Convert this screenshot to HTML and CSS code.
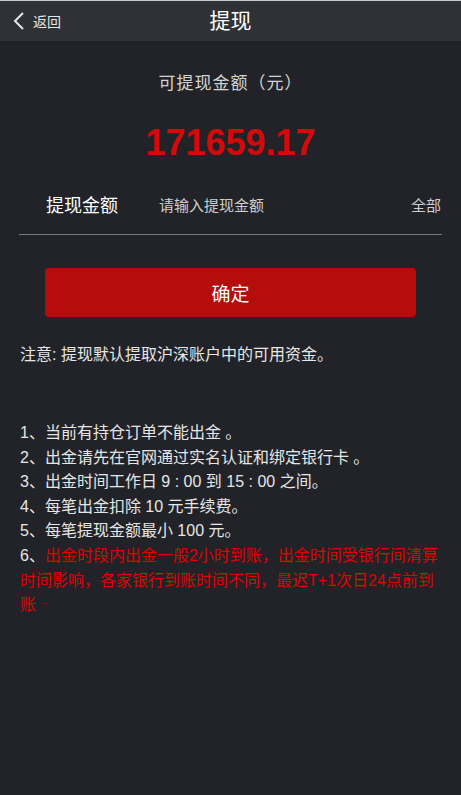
FILE: index.html
```html
<!DOCTYPE html>
<html lang="zh-CN">
<head>
<meta charset="utf-8">
<title>提现</title>
<link rel="stylesheet" href="styles.css">
</head>
<body>
<header class="topbar">
  <a class="back" href="#">
    <svg class="back-icon" width="12" height="20" viewBox="0 0 12 20"><path d="M10 2 L2 10 L10 18" fill="none" stroke="#e6e6e6" stroke-width="2"/></svg>
    <span>返回</span>
  </a>
  <h1 class="title">提现</h1>
</header>
<main class="page">
  <section class="summary">
    <div class="summary-label">可提现金额（元）</div>
    <div class="summary-amount">171659.17</div>
  </section>
  <div class="field">
    <label class="field-label">提现金额</label>
    <span class="field-input">请输入提现金额</span>
    <span class="field-all">全部</span>
  </div>
  <div class="actions">
    <button class="confirm">确定</button>
  </div>
  <p class="note">注意: 提现默认提取沪深账户中的可用资金。</p>
  <ol class="rules">
    <li>1、当前有持仓订单不能出金 。</li>
    <li>2、出金请先在官网通过实名认证和绑定银行卡 。</li>
    <li>3、出金时间工作日 9 : 00 到 15 : 00 之间。</li>
    <li>4、每笔出金扣除 10 元手续费。</li>
    <li>5、每笔提现金额最小 100 元。</li>
    <li>6、<span class="warn">出金时段内出金一般2小时到账，出金时间受银行间清算时间影响，各家银行到账时间不同，最迟T+1次日24点前到账</span></li>
  </ol>
</main>
</body>
</html>
```
FILE: styles.css
```css
* { box-sizing: border-box; }
html, body {
  margin: 0;
  padding: 0;
  background: #212328;
  font-family: "Liberation Sans", "Noto Sans CJK SC", sans-serif;
  color: #e6e6e6;
}
.topbar {
  position: relative;
  height: 41px;
  border-top: 1px solid #c9cacc;
  background: #2e3136;
  display: flex;
  align-items: center;
  justify-content: center;
}
.back {
  position: absolute;
  left: 13px;
  top: 0;
  bottom: 0;
  display: flex;
  align-items: center;
  gap: 8px;
  color: #e6e6e6;
  text-decoration: none;
  font-size: 14px;
}
.back-icon { display: block; }
.title {
  margin: 0;
  font-size: 21px;
  font-weight: normal;
  color: #ffffff;
  line-height: 40px;
}
.page {
  padding: 0 20px;
}
.summary {
  text-align: center;
  padding-top: 31px;
}
.summary-label {
  font-size: 17px;
  letter-spacing: 1px;
  line-height: 24px;
  color: #d4d4d4;
}
.summary-amount {
  margin-top: 27px;
  font-size: 36px;
  line-height: 40px;
  font-weight: bold;
  color: #d40a0a;
}
.field {
  margin: 11px -1px 0 -1px;
  height: 61px;
  border-bottom: 1px solid #77787b;
  display: flex;
  align-items: center;
}
.field-label {
  padding-left: 27px;
  width: 140px;
  font-size: 18px;
  color: #ffffff;
}
.field-input {
  flex: 1;
  font-size: 15px;
  color: #cfcfcf;
}
.field-all {
  font-size: 15px;
  color: #cfcfcf;
  padding-right: 1px;
}
.actions {
  margin-top: 33px;
  padding: 0 25px;
}
.confirm {
  display: block;
  width: 100%;
  height: 49px;
  border: 0;
  border-radius: 4px;
  background: #b50c0c;
  color: #ffffff;
  font-family: "Liberation Sans", "Noto Sans CJK SC", sans-serif;
  font-size: 19px;
}
.note {
  margin: 26px 0 0;
  font-size: 16px;
  line-height: 24px;
  color: #e6e6e6;
}
.rules {
  list-style: none;
  margin: 54px 0 0;
  padding: 0;
  font-size: 16px;
  line-height: 24.6px;
  color: #e6e6e6;
}
.warn { color: #e00000; }
```
